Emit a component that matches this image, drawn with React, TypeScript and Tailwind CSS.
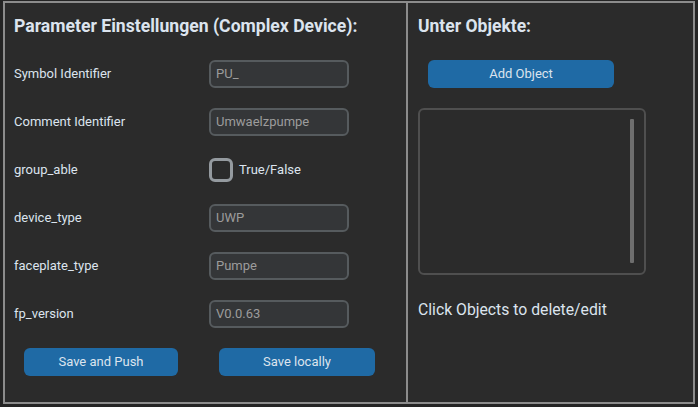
import React from "react";

const rows: { label: string; value?: string; checkbox?: boolean }[] = [
  { label: "Symbol Identifier", value: "PU_" },
  { label: "Comment Identifier", value: "Umwaelzpumpe" },
  { label: "group_able", checkbox: true },
  { label: "device_type", value: "UWP" },
  { label: "faceplate_type", value: "Pumpe" },
  { label: "fp_version", value: "V0.0.63" },
];

export default function App() {
  return (
    <div
      className="w-[698px] h-[407px] bg-[#242424] pt-[1px] pl-[3px] text-[#dce4ee]"
      style={{ fontFamily: "Roboto, 'Liberation Sans', sans-serif" }}
    >
      <div className="w-[692px] h-[403px] border-2 border-[#8c8c8c] bg-[#2b2b2b] flex">
        {/* Left panel */}
        <div className="w-[403px] h-full border-r-2 border-[#8c8c8c] flex flex-col pt-[1px]">
          <div className="h-[46px] pb-[2px] pl-[9px] flex items-center text-[17.6px] font-bold">
            Parameter Einstellungen (Complex Device):
          </div>
          {rows.map((r) => (
            <div key={r.label} className="h-[48px] flex items-center pl-[9px]">
              <div className="w-[195px] text-[13px]">{r.label}</div>
              {r.checkbox ? (
                <div className="flex items-center gap-[6px]">
                  <div className="w-[24px] h-[24px] rounded-[6px] border-[3px] border-[#949a9f]" />
                  <span className="text-[13px]">True/False</span>
                </div>
              ) : (
                <div className="w-[140px] h-[28px] rounded-[6px] border-2 border-[#565b5e] bg-[#343638] flex items-center pl-[5px] text-[13px] text-[#9c9c9c]">
                  {r.value}
                </div>
              )}
            </div>
          ))}
          <div className="mt-[10px] pl-[19px] flex gap-[41px]">
            <div className="w-[154px] h-[28px] rounded-[6px] bg-[#1f6aa5] flex items-center justify-center text-[13px]">
              Save and Push
            </div>
            <div className="w-[156px] h-[28px] rounded-[6px] bg-[#1f6aa5] flex items-center justify-center text-[13px]">
              Save locally
            </div>
          </div>
        </div>
        {/* Right panel */}
        <div className="flex-1 h-full flex flex-col pt-[1px]">
          <div className="h-[46px] pb-[2px] pl-[10px] flex items-center text-[17.5px] font-bold">
            Unter Objekte:
          </div>
          <div className="mt-[10px] ml-[20px] w-[186px] h-[28px] rounded-[6px] bg-[#1f6aa5] flex items-center justify-center text-[13px]">
            Add Object
          </div>
          <div className="mt-[20px] ml-[10px] w-[228px] h-[167px] rounded-[6px] border-2 border-[#4f4f4f] bg-[#2b2b2b] flex justify-end pt-[9px] pb-[10px] pr-[10px]">
            <div className="w-[4px] h-full bg-[#6e6e6e] rounded-[1px]" />
          </div>
          <div className="mt-[26px] pl-[10px] text-[15.75px] leading-[18px]">
            Click Objects to delete/edit
          </div>
        </div>
      </div>
    </div>
  );
}
